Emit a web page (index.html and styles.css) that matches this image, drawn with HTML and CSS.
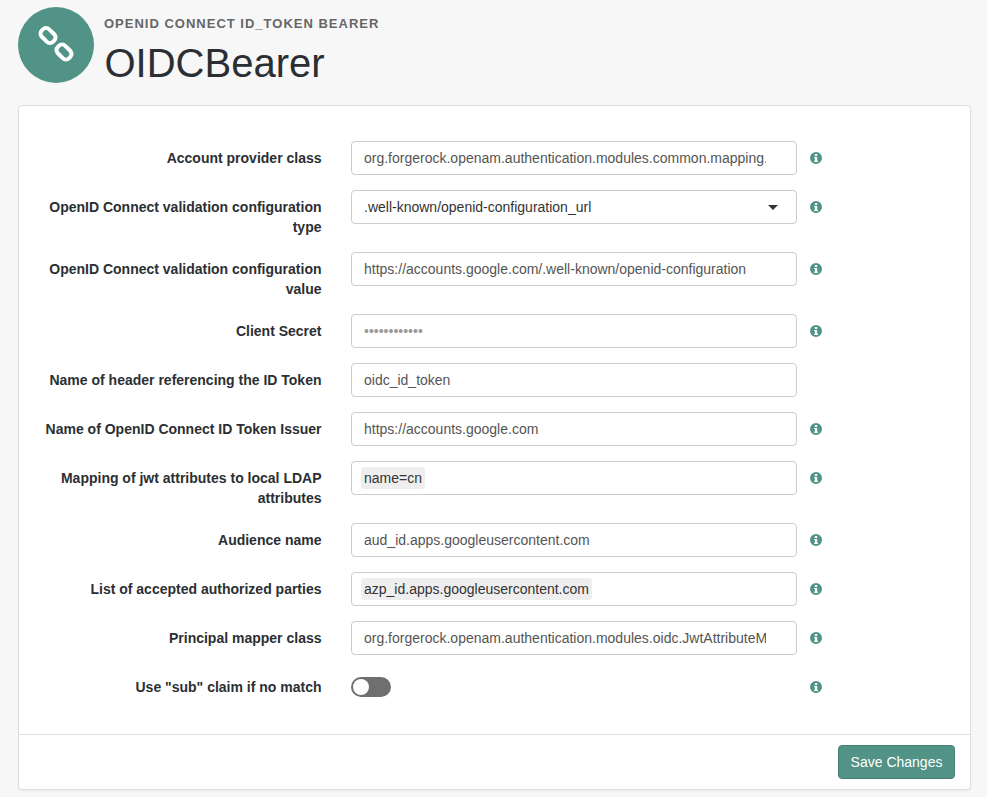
FILE: index.html
```html
<!DOCTYPE html>
<html lang="en">
<head>
<meta charset="utf-8">
<title>OIDCBearer</title>
<link rel="stylesheet" href="styles.css">
</head>
<body>
<svg class="sprite" width="0" height="0"><defs>
<symbol id="info" viewBox="0 0 12 12"><path fill-rule="evenodd" d="M6 0a6 6 0 1 0 0 12A6 6 0 0 0 6 0z M4.8 2h2.4v2H4.8z M4.1 4.9h3.1v3.9h.8V10H4.1V8.8h.8V6.1h-.8z"/></symbol>
</defs></svg>
<header class="page-header">
  <div class="avatar">
    <svg class="avatar-icon" viewBox="0 0 76 76" fill="none" stroke="#fff" stroke-width="4">
      <rect x="22" y="23.25" width="16" height="10.5" rx="4.5" transform="rotate(45 30 28.5)"/>
      <rect x="38" y="39.75" width="16" height="10.5" rx="4.5" transform="rotate(45 46 45)"/>
    </svg>
  </div>
  <div class="titles">
    <div class="eyebrow">OpenID Connect id_token bearer</div>
    <h1 class="title">OIDCBearer</h1>
  </div>
</header>
<main class="card">
  <form class="form">
    <label class="label">Account provider class</label>
    <input class="control" type="text" value="org.forgerock.openam.authentication.modules.common.mapping.JwtAttributeMapper">
    <svg class="info"><use href="#info"/></svg>

    <label class="label">OpenID Connect validation configuration type</label>
    <div class="control select"><span>.well-known/openid-configuration_url</span><i class="caret"></i></div>
    <svg class="info"><use href="#info"/></svg>

    <label class="label">OpenID Connect validation configuration value</label>
    <input class="control" type="text" value="https://accounts.google.com/.well-known/openid-configuration">
    <svg class="info"><use href="#info"/></svg>

    <label class="label">Client Secret</label>
    <input class="control" type="password" placeholder="••••••••••••">
    <svg class="info"><use href="#info"/></svg>

    <label class="label">Name of header referencing the ID Token</label>
    <input class="control" type="text" value="oidc_id_token">
    <span></span>

    <label class="label">Name of OpenID Connect ID Token Issuer</label>
    <input class="control" type="text" value="https://accounts.google.com">
    <svg class="info"><use href="#info"/></svg>

    <label class="label">Mapping of jwt attributes to local LDAP attributes</label>
    <div class="control tags"><span class="tag">name=cn</span></div>
    <svg class="info"><use href="#info"/></svg>

    <label class="label">Audience name</label>
    <input class="control" type="text" value="aud_id.apps.googleusercontent.com">
    <svg class="info"><use href="#info"/></svg>

    <label class="label">List of accepted authorized parties</label>
    <div class="control tags"><span class="tag">azp_id.apps.googleusercontent.com</span></div>
    <svg class="info"><use href="#info"/></svg>

    <label class="label">Principal mapper class</label>
    <input class="control" type="text" value="org.forgerock.openam.authentication.modules.oidc.JwtAttributeMapper">
    <svg class="info"><use href="#info"/></svg>

    <label class="label">Use "sub" claim if no match</label>
    <div class="toggle-cell"><span class="toggle"><span class="knob"></span></span></div>
    <svg class="info"><use href="#info"/></svg>
  </form>
  <footer class="card-footer">
    <button class="btn" type="button">Save Changes</button>
  </footer>
</main>
</body>
</html>
```
FILE: styles.css
```css
* { box-sizing: border-box; }
html, body { margin: 0; }
body {
  background: #f7f7f7;
  color: #333;
  font-family: "Liberation Sans", Arial, sans-serif;
  font-size: 14px;
  line-height: 20px;
  padding: 7px 16px 7px 18px;
}
.sprite { position: absolute; }
.page-header {
  display: flex;
  gap: 10px;
  height: 98px;
}
.avatar {
  width: 76px;
  height: 76px;
  border-radius: 50%;
  background: #519387;
  flex: none;
}
.avatar-icon { display: block; width: 76px; height: 76px; }
.eyebrow {
  margin-top: 7px;
  font-size: 13px;
  font-weight: 700;
  line-height: 20px;
  letter-spacing: 1px;
  text-transform: uppercase;
  color: #666;
}
.title {
  margin: 7px 0 0 .5px;
  font-size: 40px;
  font-weight: 400;
  line-height: 44px;
  color: #2b2f33;
}
.card {
  background: #fff;
  border: 1px solid #dfdfdf;
  border-radius: 4px;
  box-shadow: 0 1px 2px rgba(0,0,0,.06);
}
.form {
  display: grid;
  grid-template-columns: 283.5px 446px 12px;
  column-gap: 29.5px;
  row-gap: 15px;
  padding: 35px 0 30px 19px;
}
.form > .info { margin-left: -16.5px; margin-top: 11px; }
.label {
  padding-top: 7px;
  font-weight: 700;
  text-align: right;
  color: #2b2f33;
}
.control {
  display: block;
  width: 100%;
  height: 34px;
  margin: 0;
  padding: 6px 30px 6px 12px;
  border: 1px solid #ccc;
  border-radius: 4px;
  background: #fff;
  color: #555;
  font: 14px/20px "Liberation Sans", Arial, sans-serif;
  outline: none;
}
.control::placeholder { color: #999; opacity: 1; }
.select {
  display: flex;
  align-items: center;
  justify-content: space-between;
  padding-right: 18px;
  color: #333;
}
.caret {
  width: 0;
  height: 0;
  border-left: 5px solid transparent;
  border-right: 5px solid transparent;
  border-top: 5px solid #333;
}
.tags { display: flex; align-items: center; padding-left: 9px; }
.tag {
  background: #eee;
  border-radius: 3px;
  padding: 1px 3px;
  color: #333;
}
.toggle-cell { height: 34px; display: flex; align-items: center; }
.toggle {
  display: block;
  width: 40px;
  height: 20px;
  border-radius: 10px;
  background: #6f6f6f;
  padding: 2px;
}
.knob {
  display: block;
  width: 16px;
  height: 16px;
  border-radius: 50%;
  background: #fff;
}
.info { width: 12px; height: 12px; fill: #519387; display: block; }
.card-footer {
  border-top: 1px solid #dfdfdf;
  padding: 10px 15px 10px 0;
  display: flex;
  justify-content: flex-end;
}
.btn {
  width: 117px;
  height: 34px;
  padding: 0;
  background: #519387;
  border: 1px solid #487f75;
  border-radius: 4px;
  color: #fff;
  font: 14px/20px "Liberation Sans", Arial, sans-serif;
}
```
